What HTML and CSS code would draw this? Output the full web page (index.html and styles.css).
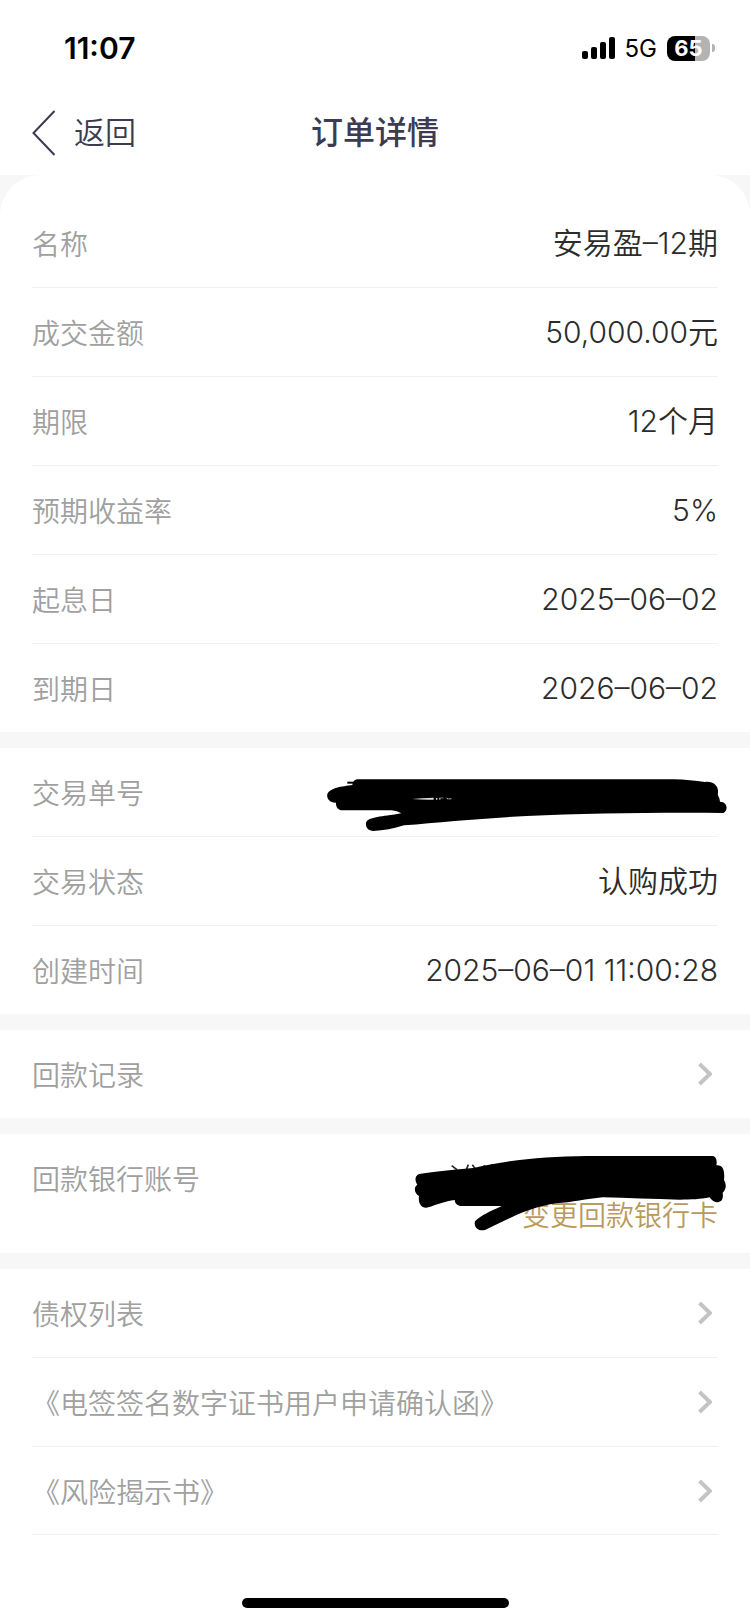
FILE: index.html
```html
<!DOCTYPE html>
<html lang="zh-CN">
<head>
    <meta charset="UTF-8">
    <meta name="viewport" content="width=device-width, initial-scale=1.0">
    <title>订单详情</title>
    <link rel="stylesheet" href="styles.css">
</head>
<body>
    <div class="status-bar">
        <span class="time">11:07</span>
        <div class="status-icons">
            <svg class="signal" viewBox="0 0 33 22" aria-hidden="true">
                <rect x="0" y="14" width="6" height="8" rx="2"/>
                <rect x="9" y="10" width="6" height="12" rx="2"/>
                <rect x="18" y="5" width="6" height="17" rx="2"/>
                <rect x="27" y="0" width="6" height="22" rx="2"/>
            </svg>
            <span class="network">5G</span>
            <div class="battery"><span class="battery-level">65</span></div>
        </div>
    </div>

    <header class="nav-bar">
        <a class="back" href="#">
            <svg class="back-icon" viewBox="0 0 24 46" aria-hidden="true"><path d="M22.5 1 L1.5 23 L22.5 45"/></svg>
            <span>返回</span>
        </a>
        <h1>订单详情</h1>
    </header>

    <main>
        <div class="card-top">
            <dl class="section first">
                <div class="row"><dt>名称</dt><dd>安易盈–12期</dd></div>
                <div class="row"><dt>成交金额</dt><dd>50,000.00元</dd></div>
                <div class="row"><dt>期限</dt><dd>12个月</dd></div>
                <div class="row"><dt>预期收益率</dt><dd>5%</dd></div>
                <div class="row"><dt>起息日</dt><dd>2025–06–02</dd></div>
                <div class="row"><dt>到期日</dt><dd>2026–06–02</dd></div>
            </dl>
        </div>

        <dl class="section">
            <div class="row"><dt>交易单号</dt><dd></dd></div>
            <div class="row"><dt>交易状态</dt><dd>认购成功</dd></div>
            <div class="row"><dt>创建时间</dt><dd>2025–06–01 11:00:28</dd></div>
            <svg class="scribble scribble-order" viewBox="0 24 1320 264" aria-hidden="true">
                <path d="M112 125 H130 V131 H112 Z"/>
                <path d="M145 118 H1090 C1125 118 1155 123 1185 126 C1210 123 1226 138 1224 158 Q1222 164 1226 170 Q1230 178 1230 185 C1252 185 1256 211 1240 219 C1050 217 830 220 650 228 C520 234 390 247 282 256 C250 266 222 272 190 273 C170 272 164 254 170 244 C180 230 230 229 274 220 Q262 213 245 211 H98 C83 211 77 199 78 188 C60 189 49 176 52 163 C57 144 97 139 127 135 C129 123 135 118 145 118 Z"/>
                <path class="gap" d="M306 177 Q335 174 371 173 V179 Q340 180 306 177 Z M378 174 h4 v5 h-4 Z M388 173 h13 v2 h-10 v4 h-3 Z M408 172 l7 4 l9 -1 v3 h-12 Z"/>
            </svg>
        </dl>

        <div class="section">
            <a class="row link-row" href="#">回款记录<svg class="arrow" viewBox="0 0 14 24" aria-hidden="true"><path d="M1.5 2 L12 12 L1.5 22"/></svg></a>
        </div>

        <dl class="section">
            <div class="row bank-row">
                <dt>回款银行账号</dt>
                <dd><a class="change-card" href="#">变更回款银行卡</a></dd>
            </div>
            <svg class="scribble scribble-bank" viewBox="0 42 1080 360" aria-hidden="true">
                <path class="mark" d="M185 137 L202 150 M235 134 L229 149 M247 134 L256 147 M281 136 L290 143 M303 134 L313 139"/>
                <path d="M88 162 C125 157 180 149 250 144 C360 119 465 109 590 108 H968 C979 109 982 124 979 136 C999 134 1005 152 1002 180 C1010 194 1009 209 998 218 C1001 239 994 247 981 247 C969 246 963 237 959 232 C930 238 905 239 870 239 C790 238 712 233 638 232 C588 237 548 247 498 250 C408 264 348 301 285 330 C266 335 250 321 255 304 C271 286 302 274 335 258 H215 C202 258 195 251 194 240 C166 243 137 255 115 262 C94 267 84 250 87 228 C73 221 70 201 82 194 C73 181 75 166 88 162 Z"/>
            </svg>
        </dl>

        <div class="section">
            <a class="row link-row" href="#">债权列表<svg class="arrow" viewBox="0 0 14 24" aria-hidden="true"><path d="M1.5 2 L12 12 L1.5 22"/></svg></a>
            <a class="row link-row" href="#">《电签签名数字证书用户申请确认函》<svg class="arrow" viewBox="0 0 14 24" aria-hidden="true"><path d="M1.5 2 L12 12 L1.5 22"/></svg></a>
            <a class="row link-row last-link" href="#">《风险揭示书》<svg class="arrow" viewBox="0 0 14 24" aria-hidden="true"><path d="M1.5 2 L12 12 L1.5 22"/></svg></a>
        </div>
    </main>

    <div class="home-area"><div class="home-indicator"></div></div>
</body>
</html>
```

FILE: styles.css
```css
* {
    box-sizing: border-box;
}

body {
    margin: 0;
    min-height: 100vh;
    display: flex;
    flex-direction: column;
    background-color: #fff;
    color: #2c2c2c;
    font-family: Inter, "Noto Sans CJK SC", sans-serif;
    font-size: 30px;
}

a {
    color: inherit;
    text-decoration: none;
}

/* status bar */
.status-bar {
    display: flex;
    justify-content: space-between;
    align-items: center;
    height: 96px;
    padding: 0 35px 0 64px;
    color: #000;
}

.time {
    font-size: 30px;
    font-weight: 600;
}

.status-icons {
    display: flex;
    align-items: center;
}

.signal {
    width: 33px;
    height: 22px;
    margin-right: 10px;
}

.network {
    margin-right: 10px;
    font-size: 24px;
}

.battery {
    display: flex;
    align-items: center;
    gap: 2px;
}

.battery-level {
    width: 43px;
    height: 25px;
    border-radius: 8px;
    background: linear-gradient(to right, #000 65%, #b3b3b3 65%);
    color: #fff;
    font-size: 22px;
    font-weight: 700;
    line-height: 25px;
    text-align: center;
}

.battery::after {
    content: "";
    width: 3px;
    height: 8px;
    border-radius: 0 3px 3px 0;
    background-color: #b3b3b3;
}

/* navigation */
.nav-bar {
    display: grid;
    grid-template-columns: 1fr auto 1fr;
    align-items: center;
    height: 79px;
    padding: 0 32px 5px;
    color: #3d3b4f;
    line-height: 40px;
}

.back {
    display: flex;
    align-items: center;
    gap: 18px;
    font-size: 31px;
    font-weight: 350;
}

.back-icon {
    width: 24px;
    height: 46px;
    fill: none;
    stroke: #3d3b4f;
    stroke-width: 2;
}

h1 {
    margin: 0;
    font-size: 32px;
    font-weight: 500;
}

/* order info */
main {
    display: flex;
    flex-direction: column;
    gap: 16px;
    background-color: #f7f7f7;
}

.section {
    position: relative;
    margin: 0;
    padding: 0 32px;
    background-color: #fff;
}

.first {
    padding-top: 24px;
    border-radius: 40px 40px 0 0;
}

.row {
    display: flex;
    justify-content: space-between;
    align-items: center;
    height: 88px;
}

.row + .row {
    height: 89px;
    border-top: 1px solid #f0f0f0;
}

dt,
.link-row {
    color: #a0a0a0;
    font-size: 28px;
    font-weight: 350;
}

dd {
    margin: 0;
    font-weight: 350;
    line-height: 40px;
    text-align: right;
}

.arrow {
    width: 14px;
    height: 24px;
    margin-right: 6px;
    fill: none;
    stroke: #c4c4c4;
    stroke-width: 4;
}

.section .bank-row {
    height: auto;
    align-items: flex-start;
    padding-bottom: 17px;
}

.bank-row dt {
    padding-top: 24px;
}

.bank-row dd {
    padding-top: 62px;
}

.change-card {
    display: block;
    color: #b99a5b;
    font-size: 28px;
}

.last-link {
    border-bottom: 1px solid #f0f0f0;
}

/* hand drawn strokes over the private numbers */
.scribble {
    position: absolute;
    top: 0;
    right: 0;
    pointer-events: none;
}

.scribble-order {
    width: 440px;
    height: 88px;
}

.scribble-bank {
    width: 360px;
    height: 120px;
}

.gap {
    fill: #ddd;
}

.mark {
    fill: none;
    stroke: #2c2c2c;
    stroke-width: 5;
}

.home-area {
    display: flex;
    justify-content: center;
    margin-top: auto;
    padding-bottom: 15px;
}

.home-indicator {
    width: 267px;
    height: 10px;
    border-radius: 5px;
    background-color: #000;
}
```
